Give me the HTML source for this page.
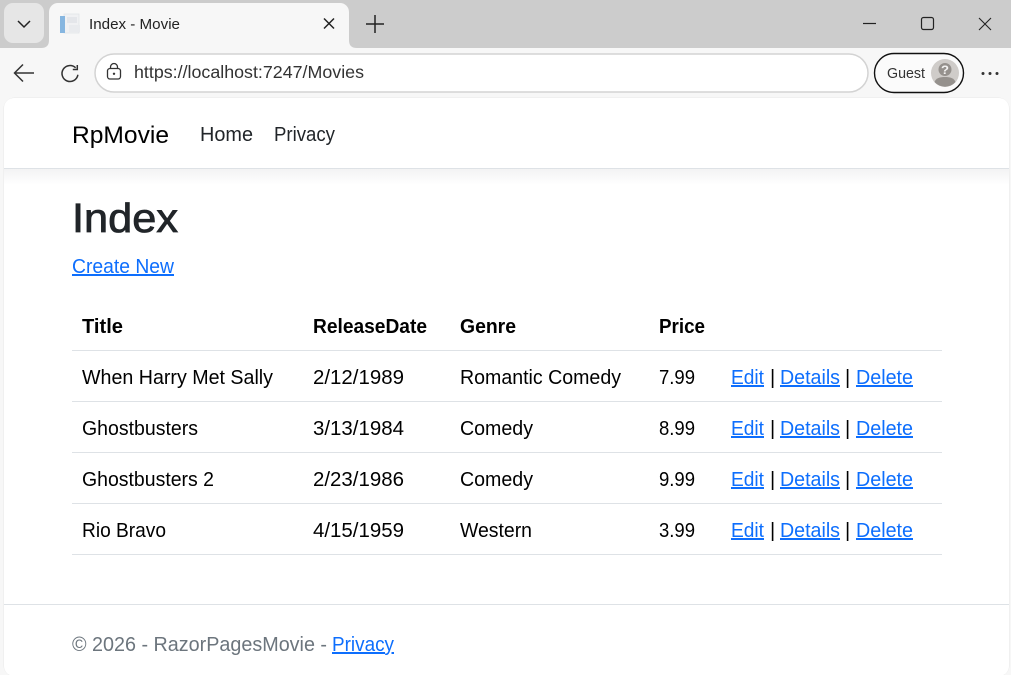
<!DOCTYPE html>
<html><head><meta charset="utf-8"><title>Index - Movie</title>
<style>
html,body{margin:0;padding:0;width:1011px;height:675px;overflow:hidden;background:#f7f7f7}
svg{display:block}
text{font-family:"Liberation Sans",sans-serif;font-size:20px;fill:#000}
.l{fill:#0d6efd;text-decoration:underline}
.b{font-weight:bold}
</style></head><body>
<svg width="1011" height="675" viewBox="0 0 1011 675" xmlns="http://www.w3.org/2000/svg">
<defs><linearGradient id="sh" x1="0" y1="0" x2="0" y2="1"><stop offset="0" stop-color="#f3f3f4"/><stop offset="1" stop-color="#fff"/></linearGradient></defs>
<rect width="1011" height="48" fill="#cccccc"/>
<rect y="48" width="1011" height="627" fill="#f7f7f7"/>
<!-- tab switcher -->
<rect x="4" y="3" width="40" height="40" rx="9" fill="#e6e6e6"/>
<path d="M18 21l6 6 6-6" fill="none" stroke="#222" stroke-width="1.5"/>
<!-- active tab -->
<path d="M41 48c6 0 8-3 8-8V12a9 9 0 0 1 9-9h282a9 9 0 0 1 9 9v28c0 5 2 8 8 8z" fill="#f7f7f7"/>
<!-- favicon -->
<rect x="64" y="14" width="15" height="19" fill="#f0f1f3" stroke="#e2e4e8" stroke-width=".8"/>
<rect x="60" y="16" width="5" height="17" fill="#86b6e0"/>
<rect x="67" y="17" width="10" height="6" fill="#e4e6ea"/>
<rect x="69" y="25" width="11" height="7" fill="#e9ebee"/>
<text x="89" y="29" style="font-size:15px;fill:#222" textLength="91" lengthAdjust="spacingAndGlyphs">Index - Movie</text>
<path d="M324 18.500l10 10M334 18.500l-10 10" stroke="#222" stroke-width="1.500" fill="none"/>
<path d="M375 15v18M366 24h18" stroke="#222" stroke-width="1.500" fill="none"/>
<!-- window controls -->
<path d="M863 23.500h13" stroke="#222" stroke-width="1.200"/>
<rect x="921.500" y="17.500" width="12" height="12" rx="2" fill="none" stroke="#222" stroke-width="1.200"/>
<path d="M979 18l12 12M991 18l-12 12" stroke="#222" stroke-width="1.100" fill="none"/>
<!-- back -->
<path d="M15 73h19M23 64.500l-8.500 8.500 8.500 8.500" fill="none" stroke="#333" stroke-width="1.500"/>
<!-- reload -->
<path d="M75.600 67.800A8 8 0 1 0 77.900 74.800" fill="none" stroke="#333" stroke-width="1.500"/>
<path d="M77.300 65v4.500h-4.500" fill="none" stroke="#333" stroke-width="1.500"/>
<!-- address bar -->
<rect x="95" y="54" width="773" height="38" rx="19" fill="#fff" stroke="#d3d3d3" stroke-width="1.500"/>
<path d="M110.500 68.500v-1.500a3.500 3.500 0 0 1 7 0v1.500" fill="none" stroke="#333" stroke-width="1.300"/>
<rect x="107.500" y="68.500" width="13" height="10.500" rx="2.500" fill="none" stroke="#333" stroke-width="1.300"/>
<circle cx="114" cy="73.800" r="1.200" fill="#333"/>
<text x="134" y="78" style="font-size:17.500px;fill:#333" textLength="230" lengthAdjust="spacingAndGlyphs">https://localhost:7247/Movies</text>
<!-- profile -->
<rect x="874.500" y="53.500" width="89" height="39" rx="19.500" fill="#fbfbfb" stroke="#111" stroke-width="1.400"/>
<text x="887" y="78" style="font-size:15px;fill:#333" textLength="38" lengthAdjust="spacingAndGlyphs">Guest</text>
<circle cx="945" cy="73" r="14" fill="#cfccc9"/>
<path d="M934.500 82c1.500-4 5.500-5 10.500-5s9 1 10.500 5a14 14 0 0 1-21 0z" fill="#95918d"/>
<circle cx="945" cy="69.500" r="6.500" fill="#95918d"/>
<text x="941" y="74" class="b" style="font-size:12px;fill:#f4f3f2" textLength="8" lengthAdjust="spacingAndGlyphs">?</text>
<circle cx="983" cy="73.500" r="1.500" fill="#333"/><circle cx="990" cy="73.500" r="1.500" fill="#333"/><circle cx="997" cy="73.500" r="1.500" fill="#333"/>
<!-- page -->
<rect x="3.500" y="97.500" width="1006" height="579" rx="11" fill="#e9e9e9"/>
<rect x="4" y="98" width="1005" height="578" rx="10" fill="#fff"/>
<!-- navbar -->
<rect x="4" y="169" width="1005" height="16" fill="url(#sh)"/>
<rect x="4" y="168" width="1005" height="1" fill="#dee2e6"/>
<text x="72" y="143" style="font-size:24px" textLength="97" lengthAdjust="spacingAndGlyphs">RpMovie</text>
<text x="200" y="141" style="fill:#212529" textLength="53" lengthAdjust="spacingAndGlyphs">Home</text>
<text x="274" y="141" style="fill:#212529" textLength="61" lengthAdjust="spacingAndGlyphs">Privacy</text>
<text x="72" y="232" style="font-size:41px;fill:#212529;stroke:#212529;stroke-width:.8" textLength="106" lengthAdjust="spacingAndGlyphs">Index</text>
<text x="72" y="273" class="l" textLength="102" lengthAdjust="spacingAndGlyphs">Create New</text>
<!-- table -->
<text x="82" y="333" class="b" textLength="41" lengthAdjust="spacingAndGlyphs">Title</text>
<text x="313" y="333" class="b" textLength="114" lengthAdjust="spacingAndGlyphs">ReleaseDate</text>
<text x="460" y="333" class="b" textLength="56" lengthAdjust="spacingAndGlyphs">Genre</text>
<text x="659" y="333" class="b" textLength="46" lengthAdjust="spacingAndGlyphs">Price</text>
<g fill="#dee2e6"><rect x="72" y="350" width="870" height="1"/><rect x="72" y="401" width="870" height="1"/><rect x="72" y="452" width="870" height="1"/><rect x="72" y="503" width="870" height="1"/><rect x="72" y="554" width="870" height="1"/></g>

<text x="82" y="384" textLength="191" lengthAdjust="spacingAndGlyphs">When Harry Met Sally</text>
<text x="313" y="384" textLength="91" lengthAdjust="spacingAndGlyphs">2/12/1989</text>
<text x="460" y="384" textLength="161" lengthAdjust="spacingAndGlyphs">Romantic Comedy</text>
<text x="659" y="384" textLength="36" lengthAdjust="spacingAndGlyphs">7.99</text>
<text x="731" y="384" class="l" textLength="33" lengthAdjust="spacingAndGlyphs">Edit</text><text x="770" y="384">|</text><text x="780" y="384" class="l" textLength="60" lengthAdjust="spacingAndGlyphs">Details</text><text x="845" y="384">|</text><text x="856" y="384" class="l" textLength="57" lengthAdjust="spacingAndGlyphs">Delete</text>

<text x="82" y="435" textLength="116" lengthAdjust="spacingAndGlyphs">Ghostbusters</text>
<text x="313" y="435" textLength="91" lengthAdjust="spacingAndGlyphs">3/13/1984</text>
<text x="460" y="435" textLength="73" lengthAdjust="spacingAndGlyphs">Comedy</text>
<text x="659" y="435" textLength="36" lengthAdjust="spacingAndGlyphs">8.99</text>
<text x="731" y="435" class="l" textLength="33" lengthAdjust="spacingAndGlyphs">Edit</text><text x="770" y="435">|</text><text x="780" y="435" class="l" textLength="60" lengthAdjust="spacingAndGlyphs">Details</text><text x="845" y="435">|</text><text x="856" y="435" class="l" textLength="57" lengthAdjust="spacingAndGlyphs">Delete</text>

<text x="82" y="486" textLength="132" lengthAdjust="spacingAndGlyphs">Ghostbusters 2</text>
<text x="313" y="486" textLength="91" lengthAdjust="spacingAndGlyphs">2/23/1986</text>
<text x="460" y="486" textLength="73" lengthAdjust="spacingAndGlyphs">Comedy</text>
<text x="659" y="486" textLength="36" lengthAdjust="spacingAndGlyphs">9.99</text>
<text x="731" y="486" class="l" textLength="33" lengthAdjust="spacingAndGlyphs">Edit</text><text x="770" y="486">|</text><text x="780" y="486" class="l" textLength="60" lengthAdjust="spacingAndGlyphs">Details</text><text x="845" y="486">|</text><text x="856" y="486" class="l" textLength="57" lengthAdjust="spacingAndGlyphs">Delete</text>

<text x="82" y="537" textLength="84" lengthAdjust="spacingAndGlyphs">Rio Bravo</text>
<text x="313" y="537" textLength="91" lengthAdjust="spacingAndGlyphs">4/15/1959</text>
<text x="460" y="537" textLength="72" lengthAdjust="spacingAndGlyphs">Western</text>
<text x="659" y="537" textLength="36" lengthAdjust="spacingAndGlyphs">3.99</text>
<text x="731" y="537" class="l" textLength="33" lengthAdjust="spacingAndGlyphs">Edit</text><text x="770" y="537">|</text><text x="780" y="537" class="l" textLength="60" lengthAdjust="spacingAndGlyphs">Details</text><text x="845" y="537">|</text><text x="856" y="537" class="l" textLength="57" lengthAdjust="spacingAndGlyphs">Delete</text>

<!-- footer -->
<rect x="4" y="604" width="1005" height="1" fill="#dee2e6"/>
<text x="72" y="651" style="fill:#6c757d" textLength="255" lengthAdjust="spacingAndGlyphs">© 2026 - RazorPagesMovie -</text>
<text x="332" y="651" class="l" textLength="62" lengthAdjust="spacingAndGlyphs">Privacy</text>
</svg>
</body></html>
